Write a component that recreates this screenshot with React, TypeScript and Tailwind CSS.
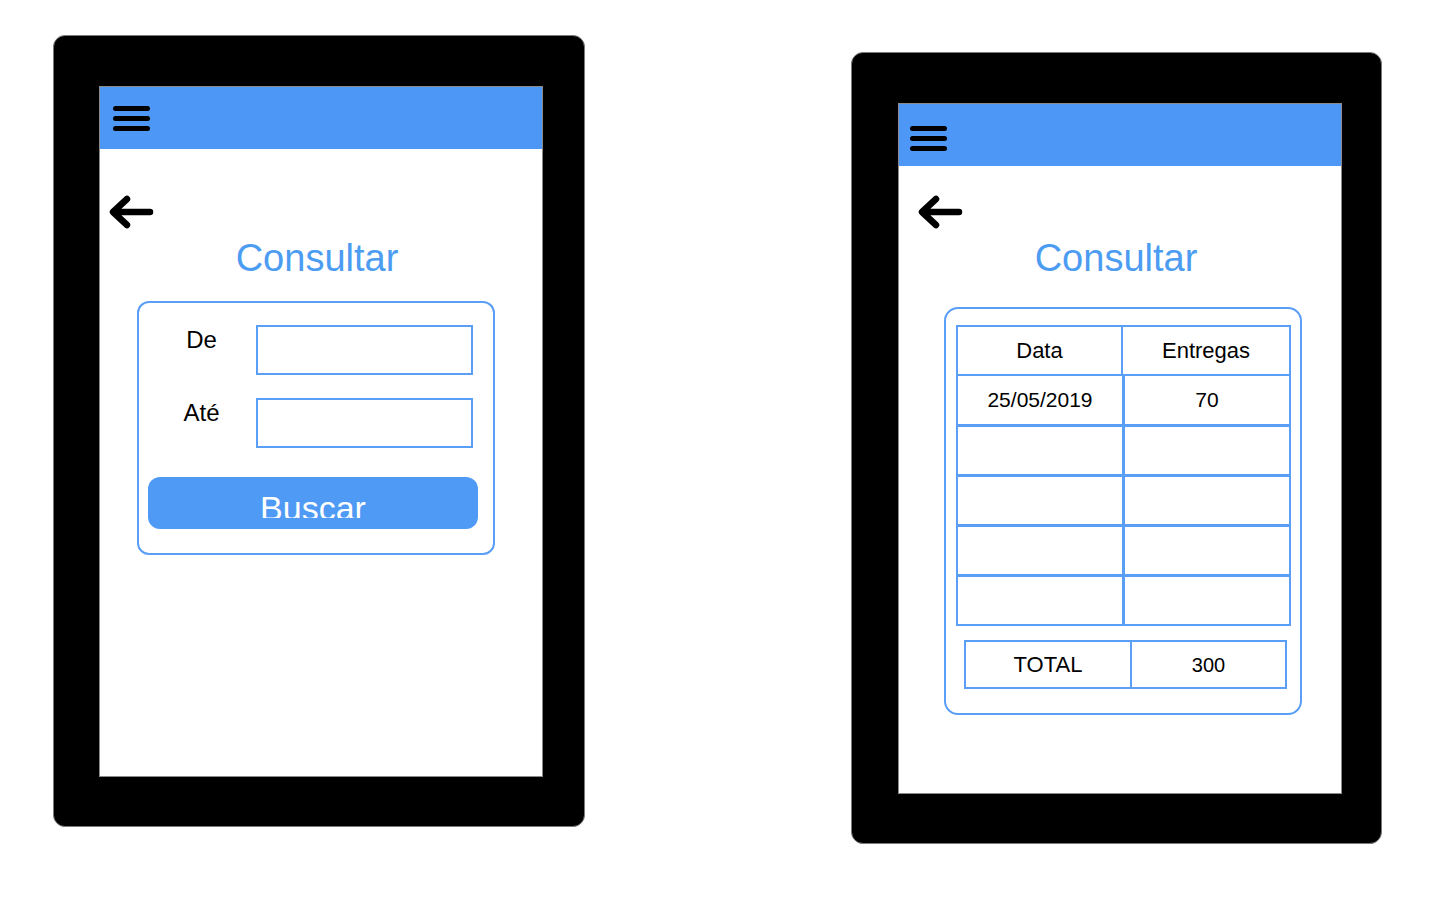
const fontStyle = { fontFamily: '"Liberation Sans", Arial, sans-serif' }

function Hamburger({ top }: { top: string }) {
  return (
    <div className={`flex w-[37px] flex-col gap-[5px] ${top}`}>
      <div className="h-[5px] rounded-full bg-black" />
      <div className="h-[5px] rounded-full bg-black" />
      <div className="h-[5px] rounded-full bg-black" />
    </div>
  )
}

function BackArrow() {
  return (
    <svg width="46" height="34" viewBox="0 0 46 34" fill="none">
      <path
        d="M42 17 H6 M19 4 L5 17 L19 30"
        stroke="black"
        strokeWidth="6.5"
        strokeLinecap="round"
        strokeLinejoin="round"
      />
    </svg>
  )
}

function Device({
  className,
  padding,
  hamburgerTop,
  headerPad,
  children,
}: {
  className: string
  padding: string
  hamburgerTop: string
  headerPad: string
  children: React.ReactNode
}) {
  return (
    <div className={`rounded-[12px] border border-[#7a7a7a] bg-black ${padding} ${className}`}>
      <div className="flex h-[691px] w-[444px] flex-col border border-[#8a8a8a] bg-white">
        <div className={`h-[62px] shrink-0 bg-[#4d98f6] ${headerPad}`}>
          <Hamburger top={hamburgerTop} />
        </div>
        {children}
      </div>
    </div>
  )
}

function Title() {
  return (
    <p className="mt-[7px] pr-[8px] text-center text-[38px] leading-[44px] text-[#4c9cf2]">Consultar</p>
  )
}

function FieldRow({ label, className }: { label: string; className: string }) {
  return (
    <div className={`flex ${className}`}>
      <div className="w-[117px] pl-[8px] pt-[1px] text-center text-[24px] leading-[28px] text-black">
        {label}
      </div>
      <div className="h-[50px] w-[217px] border-2 border-[#5a9ef5]" />
    </div>
  )
}

export default function App() {
  const emptyRows = [0, 1, 2, 3]

  return (
    <div style={fontStyle} className="flex h-[900px] w-[1436px] items-start bg-white">
      <Device
        className="ml-[53px] mt-[35px]"
        padding="pl-[45px] pt-[50px] pr-[41px] pb-[49px]"
        hamburgerTop="mt-[19px]"
        headerPad="pl-[13px]"
      >
        <div className="ml-[8px] mt-[46px]">
          <BackArrow />
        </div>
        <Title />
        <div className="ml-[37px] mt-[21px] w-[358px] rounded-[12px] border-2 border-[#5a9ef5] pb-[24px] pt-[22px]">
          <FieldRow label="De" className="" />
          <FieldRow label="Até" className="mt-[23px]" />
          <div className="ml-[9px] mt-[29px] flex h-[52px] w-[330px] justify-center rounded-[12px] bg-[#4f9af5]">
            <div className="mt-[12px] h-[29px] overflow-hidden text-[34px] leading-[38px] text-white">
              Buscar
            </div>
          </div>
        </div>
      </Device>

      <Device
        className="ml-[266px] mt-[52px]"
        padding="pl-[46px] pt-[50px] pr-[39px] pb-[49px]"
        hamburgerTop="mt-[22px]"
        headerPad="pl-[11px]"
      >
        <div className="ml-[18px] mt-[29px]">
          <BackArrow />
        </div>
        <Title />
        <div className="ml-[45px] mt-[27px] w-[358px] rounded-[14px] border-2 border-[#5a9ef5] pb-[24px] pt-[16px]">
          <div className="ml-[10px] w-[335px] border-2 border-[#5a9ef5] text-black">
            <div className="flex h-[47px] items-center text-[22px]">
              <div className="flex h-full w-[165px] items-center justify-center border-r-2 border-[#5a9ef5]">
                Data
              </div>
              <div className="flex-1 text-center">Entregas</div>
            </div>
            <div className="flex h-[50px] items-center border-t-2 border-[#5a9ef5] text-[21px]">
              <div className="flex h-full w-[167px] items-center justify-center border-r-[3px] border-[#5a9ef5]">
                25/05/2019
              </div>
              <div className="flex-1 text-center">70</div>
            </div>
            {emptyRows.map((row) => (
              <div key={row} className="flex h-[50px] border-t-[3px] border-[#5a9ef5]">
                <div className="h-full w-[167px] border-r-[3px] border-[#5a9ef5]" />
              </div>
            ))}
          </div>
          <div className="ml-[18px] mt-[14px] flex h-[49px] w-[323px] items-center border-2 border-[#5a9ef5] text-black">
            <div className="flex h-full w-[166px] items-center justify-center border-r-2 border-[#5a9ef5] text-[22px]">
              TOTAL
            </div>
            <div className="flex-1 text-center text-[20px]">300</div>
          </div>
        </div>
      </Device>
    </div>
  )
}
